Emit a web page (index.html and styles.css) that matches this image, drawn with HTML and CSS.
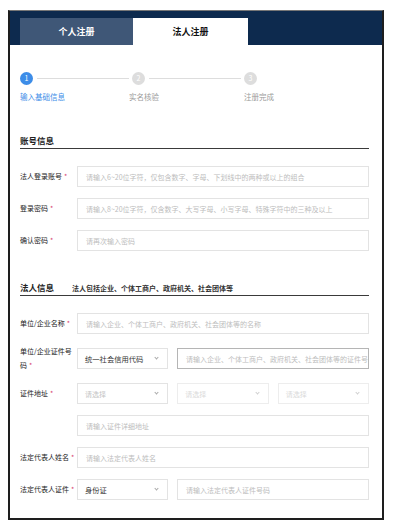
FILE: index.html
```html
<!DOCTYPE html>
<html lang="zh-CN">
<head>
<meta charset="utf-8">
<title>法人注册</title>
<link rel="stylesheet" href="styles.css">
</head>
<body>
<div class="frame">
  <div class="header">
    <div class="tab tab-inactive">个人注册</div>
    <div class="tab tab-active">法人注册</div>
  </div>
  <div class="content">
    <div class="steps">
      <div class="step active">
        <div class="step-top"><span class="dot">1</span><span class="line"></span></div>
        <div class="step-label">输入基础信息</div>
      </div>
      <div class="step">
        <div class="step-top"><span class="dot">2</span><span class="line"></span></div>
        <div class="step-label">实名核验</div>
      </div>
      <div class="step">
        <div class="step-top"><span class="dot">3</span></div>
        <div class="step-label">注册完成</div>
      </div>
    </div>

    <div class="section-title"><span class="title">账号信息</span></div>
    <div class="form">
      <div class="row">
        <div class="label">法人登录账号<span class="req">*</span></div>
        <div class="field"><div class="input ph">请输入6~20位字符，仅包含数字、字母、下划线中的两种或以上的组合</div></div>
      </div>
      <div class="row">
        <div class="label">登录密码<span class="req">*</span></div>
        <div class="field"><div class="input ph">请输入8~20位字符，仅含数字、大写字母、小写字母、特殊字符中的三种及以上</div></div>
      </div>
      <div class="row">
        <div class="label">确认密码<span class="req">*</span></div>
        <div class="field"><div class="input ph">请再次输入密码</div></div>
      </div>
    </div>

    <div class="section-title second"><span class="title">法人信息</span><span class="sub">法人包括企业、个体工商户、政府机关、社会团体等</span></div>
    <div class="form">
      <div class="row">
        <div class="label">单位/企业名称<span class="req">*</span></div>
        <div class="field"><div class="input ph">请输入企业、个体工商户、政府机关、社会团体等的名称</div></div>
      </div>
      <div class="row">
        <div class="label">单位/企业证件号码<span class="req">*</span></div>
        <div class="field pair">
          <div class="input select"><span class="val">统一社会信用代码</span><span class="chev"></span></div>
          <div class="input ph dark">请输入企业、个体工商户、政府机关、社会团体等的证件号码</div>
        </div>
      </div>
      <div class="row">
        <div class="label">证件地址<span class="req">*</span></div>
        <div class="field triple">
          <div class="input select"><span class="ph-t">请选择</span><span class="chev"></span></div>
          <div class="input select disabled"><span class="ph-t">请选择</span><span class="chev"></span></div>
          <div class="input select disabled"><span class="ph-t">请选择</span><span class="chev"></span></div>
        </div>
      </div>
      <div class="row">
        <div class="label"></div>
        <div class="field"><div class="input ph">请输入证件详细地址</div></div>
      </div>
      <div class="row">
        <div class="label">法定代表人姓名<span class="req">*</span></div>
        <div class="field"><div class="input ph">请输入法定代表人姓名</div></div>
      </div>
      <div class="row">
        <div class="label">法定代表人证件<span class="req">*</span></div>
        <div class="field pair">
          <div class="input select"><span class="val">身份证</span><span class="chev"></span></div>
          <div class="input ph">请输入法定代表人证件号码</div>
        </div>
      </div>
    </div>
  </div>
</div>
</body>
</html>
```

FILE: styles.css
```css
* { box-sizing: border-box; }
html, body { margin: 0; padding: 0; background: #fff; }
body {
  font-family: "Noto Sans CJK SC", "Noto Sans", sans-serif;
  color: #333;
  padding: 10px 0 0 8px;
}
.frame {
  width: 376px;
  border: 2px solid #1e1e1e;
  border-top: 1px solid #777;
  background: #fff;
}
.header {
  background: #0d2a4e;
  height: 34px;
  display: flex;
  align-items: flex-end;
  padding-left: 10px;
}
.tab {
  height: 27px;
  display: flex;
  align-items: center;
  justify-content: center;
  font-size: 9px;
  font-weight: 700;
}
.tab-inactive { width: 113px; background: #3f5777; color: #fff; }
.tab-active { width: 115px; background: #fff; color: #111; }

.content { padding: 27px 13px 18px 10px; }

.steps { display: flex; }
.step { width: 112px; }
.step-top { display: flex; align-items: center; height: 13px; }
.dot {
  width: 13px; height: 13px; border-radius: 50%;
  background: #ddd; color: #fff;
  font-size: 7px; line-height: 13px; text-align: center;
  flex: none;
}
.step.active .dot { background: #3d8de8; }
.line { flex: 1; height: 1px; background: #ddd; margin: 0 3px 0 4px; }
.step-label { font-size: 7.5px; color: #9a9a9a; margin-top: 6px; line-height: 11px; }
.step.active .step-label { color: #3d8de8; }
.step:nth-child(2) .step-label { margin-left: -3px; }

.section-title {
  margin-top: 32px;
  border-bottom: 1px solid #3a3a3a;
  padding-bottom: 2px;
  display: flex;
  align-items: baseline;
}
.section-title.second { margin-top: 30px; }
.title { font-size: 8.5px; font-weight: 700; color: #222; line-height: 12px; }
.sub { font-size: 7px; color: #333; font-weight: 600; margin-left: 18px; }

.form { padding-top: 17px; display: flex; flex-direction: column; gap: 11px; }
.row { display: flex; align-items: center; }
.label {
  width: 57px; flex: none;
  font-size: 7px; line-height: 13.5px; color: #222;
}
.req { color: #d63a6e; margin-left: 2px; }
.field { flex: 1; display: flex; min-width: 0; }
.pair { gap: 9px; }
.pair .select { width: 91px; flex: none; }
.pair .input:last-child { flex: 1; }
.triple { display: grid; grid-template-columns: 1fr 1fr 1fr; gap: 9px; }

.input {
  height: 21px;
  border: 1px solid #e3e3e3;
  padding: 0 8px;
  font-size: 7px;
  display: flex;
  align-items: center;
  white-space: nowrap;
  overflow: hidden;
  flex: 1;
  min-width: 0;
}
.ph { color: #bdbdbd; }
.input.dark { border-color: #b5b5b5; }
.select { justify-content: space-between; padding-left: 7px; padding-right: 9px; }
.val { color: #333; font-size: 7.3px; }
.ph-t { color: #c4c4c4; }
.chev {
  width: 3px; height: 3px;
  border-right: 1px solid #aaa; border-bottom: 1px solid #aaa;
  transform: rotate(45deg);
  margin-top: -2px;
}
.select.disabled { border-color: #ededed; }
.select.disabled .ph-t { color: #dadada; }
.select.disabled .chev { border-color: #d0d0d0; }
```
